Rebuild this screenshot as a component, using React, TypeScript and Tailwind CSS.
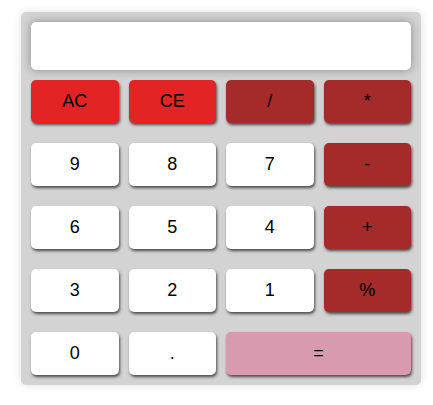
import React from "react";

const btn =
  "h-[43px] rounded-[5px] shadow-[1px_2px_3px_rgba(0,0,0,0.65)] flex items-center justify-center text-[18px] text-black";

export default function App() {
  const rows: { label: string; cls: string; span?: boolean }[][] = [
    [
      { label: "AC", cls: "bg-[#e32424]" },
      { label: "CE", cls: "bg-[#e32424]" },
      { label: "/", cls: "bg-[#a52a2a]" },
      { label: "*", cls: "bg-[#a52a2a]" },
    ],
    [
      { label: "9", cls: "bg-white" },
      { label: "8", cls: "bg-white" },
      { label: "7", cls: "bg-white" },
      { label: "-", cls: "bg-[#a52a2a]" },
    ],
    [
      { label: "6", cls: "bg-white" },
      { label: "5", cls: "bg-white" },
      { label: "4", cls: "bg-white" },
      { label: "+", cls: "bg-[#a52a2a]" },
    ],
    [
      { label: "3", cls: "bg-white" },
      { label: "2", cls: "bg-white" },
      { label: "1", cls: "bg-white" },
      { label: "%", cls: "bg-[#a52a2a]" },
    ],
    [
      { label: "0", cls: "bg-white" },
      { label: ".", cls: "bg-white" },
      { label: "=", cls: "bg-[#d79aae]", span: true },
    ],
  ];
  return (
    <div
      className="w-[433px] h-[405px] bg-white pt-[12px] pl-[21px]"
      style={{ fontFamily: '"Liberation Sans", Arial, sans-serif' }}
    >
      <div className="w-[400px] bg-[#d3d3d3] rounded-[5px] p-[10px] shadow-[0_0_8px_rgba(0,0,0,0.12)]">
        <div className="h-[48px] bg-white rounded-[5px] shadow-[0_0_10px_rgba(0,0,0,0.35)]" />
        <div className="mt-[10px] flex flex-col gap-[20px]">
          {rows.map((row, i) => (
            <div key={i} className="grid grid-cols-4 gap-[10px]">
              {row.map((b) => (
                <button
                  key={b.label}
                  className={`${btn} ${b.cls} ${b.span ? "col-span-2" : ""}`}
                >
                  {b.label}
                </button>
              ))}
            </div>
          ))}
        </div>
      </div>
    </div>
  );
}
